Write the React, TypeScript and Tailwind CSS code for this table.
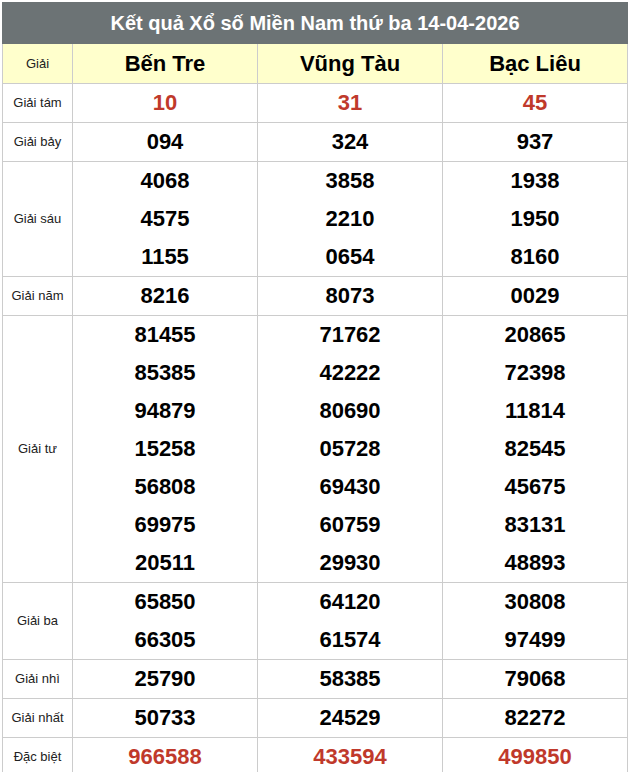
const provinces = ["Bến Tre", "Vũng Tàu", "Bạc Liêu"];

type Row = { label: string; values: string[][]; red?: boolean };

const rows: Row[] = [
  { label: "Giải tám", values: [["10"], ["31"], ["45"]], red: true },
  { label: "Giải bảy", values: [["094"], ["324"], ["937"]] },
  {
    label: "Giải sáu",
    values: [
      ["4068", "4575", "1155"],
      ["3858", "2210", "0654"],
      ["1938", "1950", "8160"],
    ],
  },
  { label: "Giải năm", values: [["8216"], ["8073"], ["0029"]] },
  {
    label: "Giải tư",
    values: [
      ["81455", "85385", "94879", "15258", "56808", "69975", "20511"],
      ["71762", "42222", "80690", "05728", "69430", "60759", "29930"],
      ["20865", "72398", "11814", "82545", "45675", "83131", "48893"],
    ],
  },
  {
    label: "Giải ba",
    values: [
      ["65850", "66305"],
      ["64120", "61574"],
      ["30808", "97499"],
    ],
  },
  { label: "Giải nhì", values: [["25790"], ["58385"], ["79068"]] },
  { label: "Giải nhất", values: [["50733"], ["24529"], ["82272"]] },
  { label: "Đặc biệt", values: [["966588"], ["433594"], ["499850"]], red: true },
];

export default function App() {
  return (
    <div className="min-h-screen bg-white pl-[2px] pt-[2px] font-['Liberation_Sans',Arial,sans-serif]">
      <div className="w-[626px]">
        <div className="flex h-[42px] items-center justify-center bg-[#6c7375] text-[20px] font-bold text-white">
          Kết quả Xổ số Miền Nam thứ ba 14-04-2026
        </div>
        <table className="w-full table-fixed border-collapse">
          <colgroup>
            <col className="w-[70px]" />
            <col />
            <col />
            <col />
          </colgroup>
          <thead>
            <tr className="bg-[#ffffcc]">
              <th className="h-[39px] border border-t-0 border-[#cccccc] text-[13px] font-normal text-[#222]">
                Giải
              </th>
              {provinces.map((p) => (
                <th
                  key={p}
                  className="border border-t-0 border-[#cccccc] text-[22px] font-bold text-black"
                >
                  {p}
                </th>
              ))}
            </tr>
          </thead>
          <tbody>
            {rows.map((row) => (
              <tr key={row.label}>
                <td className="border border-[#cccccc] text-center text-[13px] text-[#222]">
                  {row.label}
                </td>
                {row.values.map((vals, i) => (
                  <td
                    key={i}
                    className={`border border-[#cccccc] p-0 text-center text-[22px] font-bold ${
                      row.red ? "text-[#c0392b]" : "text-black"
                    }`}
                  >
                    {vals.map((v, j) => (
                      <div key={j} className="flex h-[38px] items-center justify-center">
                        {v}
                      </div>
                    ))}
                  </td>
                ))}
              </tr>
            ))}
          </tbody>
        </table>
      </div>
    </div>
  );
}
